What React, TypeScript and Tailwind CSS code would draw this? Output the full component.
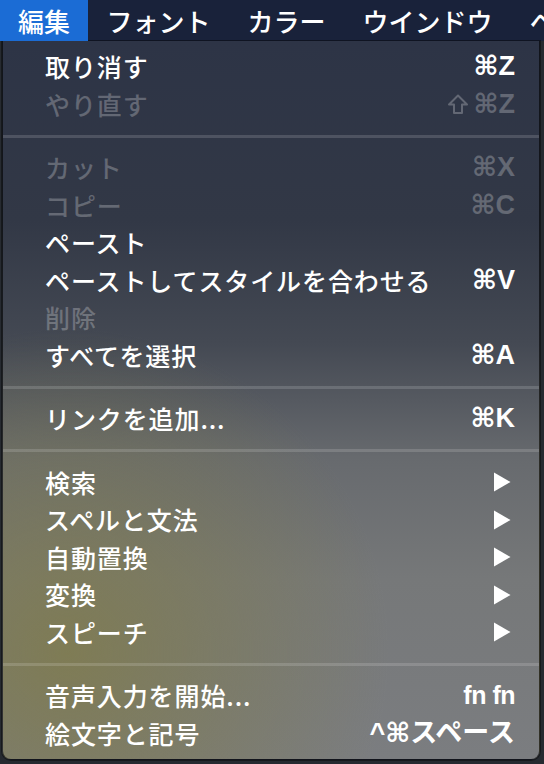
import React from "react";

type Item = {
  label: string;
  shortcut?: string;
  shift?: boolean;
  small?: boolean;
  disabled?: boolean;
  submenu?: boolean;
};

const groups: Item[][] = [
  [
    { label: "取り消す", shortcut: "⌘Z" },
    { label: "やり直す", shortcut: "⌘Z", shift: true, disabled: true },
  ],
  [
    { label: "カット", shortcut: "⌘X", disabled: true },
    { label: "コピー", shortcut: "⌘C", disabled: true },
    { label: "ペースト" },
    { label: "ペーストしてスタイルを合わせる", shortcut: "⌘V" },
    { label: "削除", disabled: true },
    { label: "すべてを選択", shortcut: "⌘A" },
  ],
  [{ label: "リンクを追加...", shortcut: "⌘K" }],
  [
    { label: "検索", submenu: true },
    { label: "スペルと文法", submenu: true },
    { label: "自動置換", submenu: true },
    { label: "変換", submenu: true },
    { label: "スピーチ", submenu: true },
  ],
  [
    { label: "音声入力を開始...", shortcut: "fn fn", small: true },
    { label: "絵文字と記号", shortcut: "^⌘スペース" },
  ],
];

const menuBar = ["編集", "フォント", "カラー", "ウインドウ", "ヘルプ"];

const jp = "font-['Noto_Sans_CJK_JP','Noto_Sans',sans-serif]";

// outlined shift arrow, wider than the font glyph
const ShiftIcon = () => (
  <svg width="22" height="22" viewBox="0 0 22 22" className="mr-[4px] shrink-0">
    <path
      d="M11 2.5 L20 11.5 L15 11.5 L15 20 L7 20 L7 11.5 L2 11.5 Z"
      fill="none"
      stroke="currentColor"
      strokeWidth="2"
      strokeLinejoin="round"
    />
  </svg>
);

const Row = ({ item }: { item: Item }) => (
  <div
    className={`flex h-[37.5px] items-center justify-between pl-[42px] pr-[24px] ${
      item.disabled ? "text-white/25" : "text-white"
    }`}
  >
    <span className="text-[25px] font-medium leading-none tracking-[0.9px]">{item.label}</span>
    {item.shortcut && (
      <span
        className={`flex items-center leading-none font-['Liberation_Sans','DejaVu_Sans','Noto_Sans_CJK_JP',sans-serif] ${
          item.small ? "text-[25px] font-bold tracking-[-0.5px]" : "text-[27px] font-semibold"
        }`}
      >
        {item.shift && <ShiftIcon />}
        {item.shortcut}
      </span>
    )}
    {item.submenu && (
      <svg width="18" height="20" viewBox="0 0 18 20" className="mr-[4px]">
        <path d="M1 0.5 L17.5 10 L1 19.5 Z" fill="white" />
      </svg>
    )}
  </div>
);

export default function App() {
  return (
    <div className={`h-[764px] w-[544px] overflow-hidden bg-[#262a30] ${jp}`}>
      <div className="flex h-[41px] items-center overflow-hidden whitespace-nowrap bg-[#19223a] text-[26px] font-medium text-white">
        {menuBar.map((m, i) => (
          <div
            key={m}
            className={`flex h-full shrink-0 items-center ${
              i === 0 ? "bg-[#1b6cd5] px-[18px]" : "px-[18.5px]"
            }`}
          >
            {m}
          </div>
        ))}
      </div>
      <div className="ml-[2px] w-[538px] rounded-b-[9px] border border-t-0 border-black/60 bg-[radial-gradient(ellipse_60%_45%_at_12%_85%,rgba(128,124,78,0.85),transparent),linear-gradient(to_bottom,#2d3446_0%,#323846_25%,#444953_42%,#676a6e_58%,#767879_75%,#7b7d80_100%)] py-[7px] shadow-[0_0_0_1px_rgba(0,0,0,0.4)]">
        {groups.map((g, gi) => (
          <div key={gi}>
            {gi > 0 && (
              <div className="flex h-[26px] items-center">
                <div className="h-[3px] w-full bg-white/15" />
              </div>
            )}
            {g.map((item) => (
              <Row key={item.label} item={item} />
            ))}
          </div>
        ))}
      </div>
    </div>
  );
}
